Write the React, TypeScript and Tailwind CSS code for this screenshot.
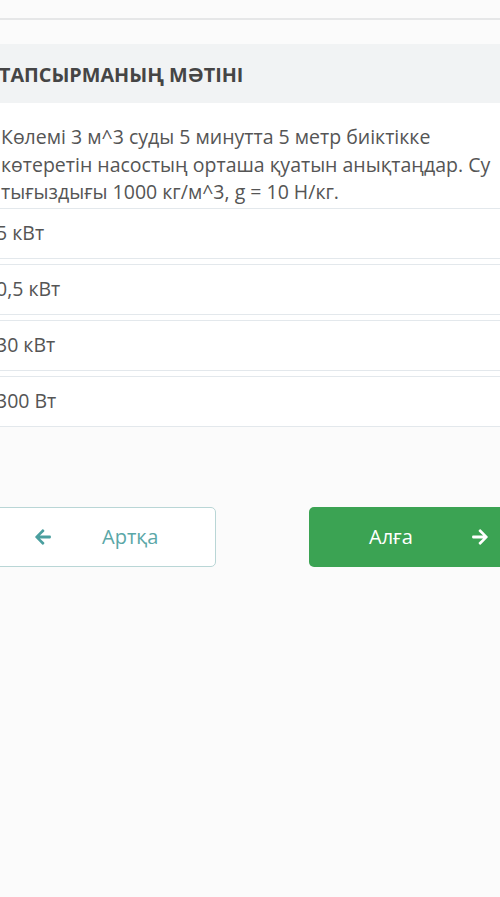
import { FaArrowLeft, FaArrowRight } from 'react-icons/fa'

const options = ['5 кВт', '0,5 кВт', '30 кВт', '300 Вт']

export default function App() {
  return (
    <div
      className="w-[500px] h-[897px] overflow-hidden bg-[#fbfbfb] text-[#555]"
      style={{ fontFamily: '"Open Sans", "Noto Sans", sans-serif' }}
    >
      <div className="pt-[18px]">
        <div className="h-[2px] bg-[#e6e7e8]" />
      </div>

      <div className="mt-[24px] h-[59px] bg-[#f1f3f4] flex items-center -ml-[1px] pt-[2px]">
        <h2 className="text-[19.8px] font-bold text-[#454545]">ТАПСЫРМАНЫҢ МӘТІНІ</h2>
      </div>

      <div className="bg-white">
        <p className="pt-[20px] pb-[2px] pl-[1px] text-[19.5px] leading-[27.5px] text-[#555] whitespace-nowrap">
          Көлемі 3 м^3 суды 5 минутта 5 метр биіктікке
          <br />
          көтеретін насостың орташа қуатын анықтаңдар. Су
          <br />
          тығыздығы 1000 кг/м^3, g = 10 Н/кг.
        </p>

        <div className="flex flex-col gap-[5px] -ml-[4px]">
          {options.map((opt) => (
            <div
              key={opt}
              className="h-[51px] flex items-center border-y border-[#e3e8ec] bg-white text-[19.5px] text-[#555]"
            >
              {opt}
            </div>
          ))}
        </div>
      </div>

      <div className="mt-[80px] flex items-center">
        <button className="shrink-0 -ml-[12px] w-[228px] h-[60px] rounded-[5px] border border-[#b9d6d6] bg-white flex items-center text-[20px] text-[#5aa7a7]">
          <FaArrowLeft className="ml-[45px] text-[#4a9f9f]" size={18} />
          <span className="ml-[50px]">Артқа</span>
        </button>
        <button className="shrink-0 ml-[93px] w-[210px] h-[60px] rounded-[5px] bg-[#3ba353] flex items-center text-[20px] text-white">
          <span className="ml-[60px]">Алға</span>
          <FaArrowRight className="ml-[58px] text-white" size={18} />
        </button>
      </div>
    </div>
  )
}
